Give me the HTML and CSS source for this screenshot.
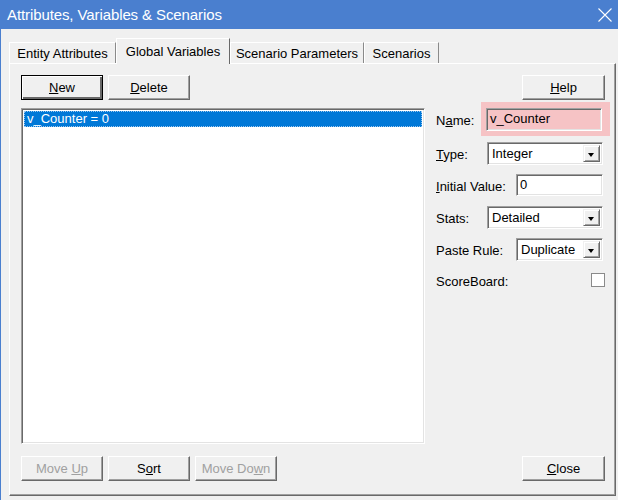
FILE: index.html
```html
<!DOCTYPE html>
<html lang="en">
<head>
    <meta charset="UTF-8">
    <title>Attributes, Variables &amp; Scenarios</title>
    <link rel="stylesheet" href="styles.css">
</head>
<body>
    <div class="window">
        <div class="titlebar">
            <span class="title">Attributes, Variables &amp; Scenarios</span>
            <svg class="close-x" width="14" height="14" viewBox="0 0 14 14">
                <path d="M0.5 0.5 L13.5 13.5 M13.5 0.5 L0.5 13.5" stroke="#fff" stroke-width="1.1" fill="none"/>
            </svg>
        </div>
        <div class="dialog">
            <div class="tabs">
                <div class="tab tab-entity">Entity Attributes</div>
                <div class="tab tab-globals active">Global Variables</div>
                <div class="tab tab-params">Scenario Parameters</div>
                <div class="tab tab-scen">Scenarios</div>
            </div>
            <div class="panel">
                <div class="left-col">
                    <div class="btn-row">
                        <button class="btn default"><u>N</u>ew</button>
                        <button class="btn"><u>D</u>elete</button>
                    </div>
                    <div class="listbox">
                        <div class="item selected">v_Counter = 0</div>
                    </div>
                    <div class="btn-row bottom-row">
                        <button class="btn" disabled>Move <u>U</u>p</button>
                        <button class="btn">S<u>o</u>rt</button>
                        <button class="btn" disabled>Move Do<u>w</u>n</button>
                    </div>
                </div>
                <div class="right-col">
                    <button class="btn help-btn"><u>H</u>elp</button>

                    <div class="field field-name">
                        <label>N<u>a</u>me:</label>
                        <div class="name-box">
                            <div class="textbox wide">v_Counter</div>
                        </div>
                    </div>
                    <div class="field field-type">
                        <label><u>T</u>ype:</label>
                        <div class="combo wide"><span>Integer</span><i class="drop"></i></div>
                    </div>
                    <div class="field field-init">
                        <label><u>I</u>nitial Value:</label>
                        <div class="textbox short">0</div>
                    </div>
                    <div class="field field-stats">
                        <label>Stats:</label>
                        <div class="combo wide"><span>Detailed</span><i class="drop"></i></div>
                    </div>
                    <div class="field field-paste">
                        <label>Paste Rule:</label>
                        <div class="combo short"><span>Duplicate</span><i class="drop"></i></div>
                    </div>
                    <div class="field field-score">
                        <label>ScoreBoard:</label>
                        <div class="checkbox"></div>
                    </div>

                    <button class="btn close-btn"><u>C</u>lose</button>
                </div>
            </div>
        </div>
    </div>
</body>
</html>
```

FILE: styles.css
```css
* {
    margin: 0;
    padding: 0;
    box-sizing: border-box;
}

body {
    font-family: "Liberation Sans", Arial, sans-serif;
    font-size: 13px;
    color: #000;
    background: #f0f0f0;
}

.window {
    width: 618px;
    height: 500px;
    display: flex;
    flex-direction: column;
    border-left: 1px solid #4a7fcf;
    background: #f0f0f0;
}

/* title bar */
.titlebar {
    height: 29px;
    margin-left: -1px;
    padding: 0 6px 0 7px;
    background: #4a7fcf;
    color: #fff;
    display: flex;
    align-items: center;
    justify-content: space-between;
}

.title {
    font-size: 15px;
    letter-spacing: -0.1px;
    padding-bottom: 1px;
}

/* tab strip + page */
.dialog {
    flex: 1;
    display: flex;
    flex-direction: column;
    padding: 9px 2px 4px 8px;
}

.tabs {
    height: 25px;
    display: flex;
    align-items: flex-end;
}

.tab {
    height: 21px;
    line-height: 22px;
    text-align: center;
    border-top: 1px solid #fff;
    border-left: 1px solid #fff;
    border-right: 1px solid #8a8a8a;
    background: #f0f0f0;
}

.tab-entity { width: 107px; }
.tab-globals { width: 114px; }
.tab-params { width: 134px; }
.tab-scen { width: 75px; }

.tab.active {
    height: 26px;
    line-height: 25px;
    margin-bottom: -1px;
    position: relative;
    z-index: 1;
    border-right-color: #696969;
}

.panel {
    flex: 1;
    display: flex;
    padding: 11px 10px 14px 11px;
    border-top: 1px solid #fff;
    border-left: 1px solid #fff;
    border-right: 1px solid #696969;
    border-bottom: 1px solid #696969;
    box-shadow: inset -1px -1px 0 #a0a0a0;
}

/* buttons */
.btn {
    width: 82px;
    height: 25px;
    font-family: inherit;
    font-size: 13px;
    color: #000;
    background: #f0f0f0;
    border-top: 1px solid #fff;
    border-left: 1px solid #fff;
    border-right: 1px solid #696969;
    border-bottom: 1px solid #696969;
    box-shadow: inset -1px -1px 0 #a0a0a0;
}

.btn.default {
    border: 1px solid #000;
    box-shadow: inset 1px 1px 0 #fff, inset -2px -2px 0 #696969;
}

.btn:disabled {
    color: #a0a0a0;
}

.btn-row {
    display: flex;
    gap: 5px;
}

/* left column: list */
.left-col {
    width: 404px;
    display: flex;
    flex-direction: column;
}

.listbox {
    height: 336px;
    margin-top: 8px;
    padding: 2px;
    background: #fff;
    border-top: 1px solid #a0a0a0;
    border-left: 1px solid #a0a0a0;
    border-right: 1px solid #fff;
    border-bottom: 1px solid #fff;
    box-shadow: inset 1px 1px 0 #696969, inset -1px -1px 0 #e3e3e3;
}

.item {
    height: 16px;
    line-height: 16px;
    padding-left: 3px;
}

.item.selected {
    background: #0078d7;
    color: #fff;
    outline: 1px dotted #9cc7ee;
    outline-offset: -1px;
}

.bottom-row {
    margin-top: auto;
}

/* right column: properties */
.right-col {
    flex: 1;
    margin-left: 11px;
    display: flex;
    flex-direction: column;
}

.help-btn {
    align-self: flex-end;
    width: 83px;
}

.close-btn {
    align-self: flex-end;
    width: 83px;
    margin-top: auto;
}

.field {
    display: flex;
    align-items: center;
    justify-content: space-between;
    height: 23px;
}

.field label {
    padding-top: 2px;
}

.field-name {
    height: 34px;
    margin-top: 2px;
    margin-right: -5px;
}

.field-type { margin-top: 6px; }
.field-init { margin-top: 9px; height: 22px; }
.field-stats { margin-top: 10px; }
.field-paste { margin-top: 9px; }
.field-score { margin-top: 9px; height: 20px; }

.name-box {
    width: 129px;
    height: 34px;
    padding: 6px 7px 5px 5px;
    background: #f6c3c5;
}

.textbox,
.combo {
    height: 100%;
    padding-left: 3px;
    line-height: 19px;
    background: #fff;
    border-top: 1px solid #a0a0a0;
    border-left: 1px solid #a0a0a0;
    border-right: 1px solid #fff;
    border-bottom: 1px solid #fff;
    box-shadow: inset 1px 1px 0 #696969, inset -1px -1px 0 #e3e3e3;
}

.name-box .textbox {
    width: 117px;
    height: 23px;
    background: #f6c3c5;
}

.field .wide { width: 116px; margin-right: 2px; }
.field .short { width: 87px; margin-right: 2px; }

.combo {
    display: flex;
    align-items: center;
    justify-content: space-between;
    padding: 2px 2px 2px 4px;
}

.drop {
    width: 17px;
    height: 100%;
    position: relative;
    background: #f0f0f0;
    border-top: 1px solid #f0f0f0;
    border-left: 1px solid #f0f0f0;
    border-right: 1px solid #696969;
    border-bottom: 1px solid #696969;
    box-shadow: inset 1px 1px 0 #fff, inset -1px -1px 0 #a0a0a0;
}

/* little black arrow on the dropdown button */
.drop::after {
    content: "";
    position: absolute;
    left: 4px;
    top: 7px;
    border-left: 3.5px solid transparent;
    border-right: 3.5px solid transparent;
    border-top: 4px solid #000;
}

.checkbox {
    width: 14px;
    height: 14px;
    background: #fff;
    border: 1px solid #8a8a8a;
}
```
